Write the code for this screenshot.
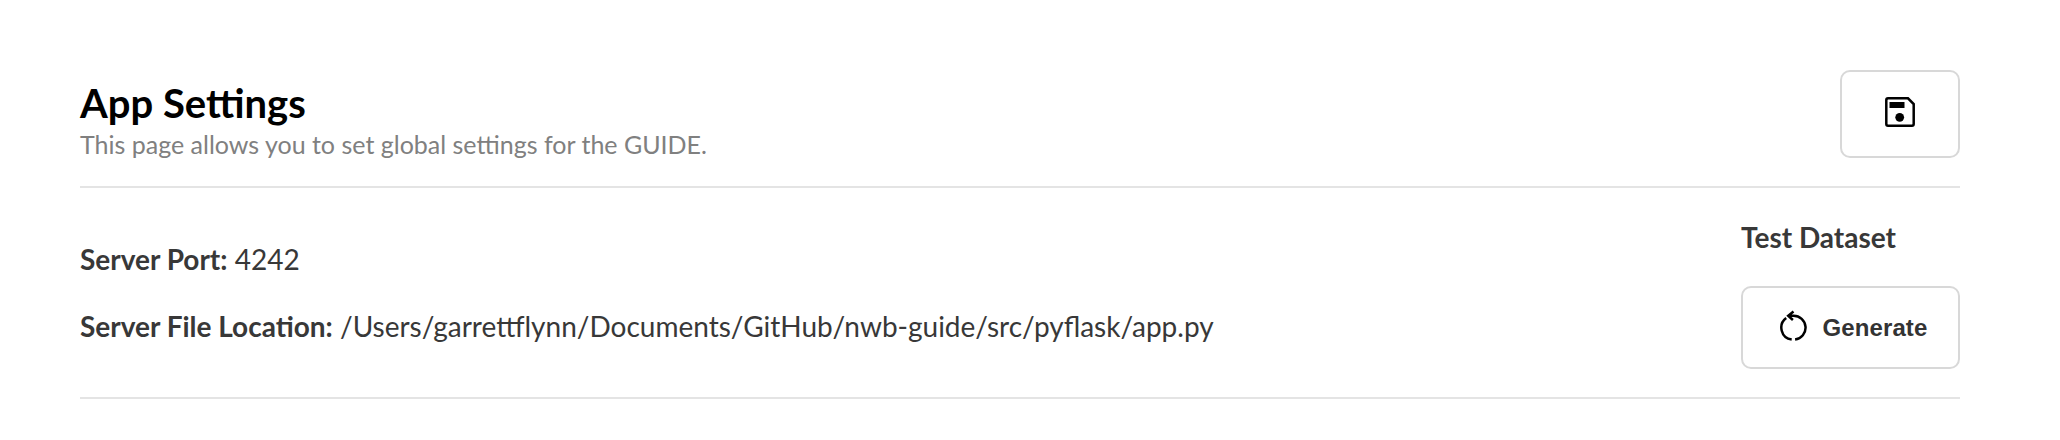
<main>
  <header>
    <div>
      <h1>App Settings</h1>
      <p class="sub">This page allows you to set global settings for the GUIDE.</p>
    </div>
    <button class="save" aria-label="Save">
      <svg width="30" height="30" viewBox="0 0 30 30"><path d="M3 1.300H23L28.700 7V27Q28.700 28.700 27 28.700H3Q1.300 28.700 1.300 27V3Q1.300 1.300 3 1.300Z" fill="none" stroke="#000" stroke-width="2.500"/><path d="M4.500 5H19.500V11H4.500Z"/><circle cx="14.700" cy="20.300" r="4.400"/></svg>
    </button>
  </header>
  <section>
    <div class="info">
      <p><b>Server Port:</b> 4242</p>
      <p><b>Server File Location:</b> /Users/garrettflynn/Documents/GitHub/nwb-guide/src/pyflask/app.py</p>
    </div>
    <div class="test">
      <h4>Test Dataset</h4>
      <button class="gen">
        <svg width="28" height="32" viewBox="0 0 28 32" fill="none" stroke="#000" stroke-width="2.500"><path d="M7.200 8.100A12 12 0 0 0 12.700 29.600M16.100 29.600A12 12 0 0 0 14.400 5.700L9.200 5.700M14.500 1.500L9.200 5.700L13.900 10"/></svg>
        <span>Generate</span>
      </button>
    </div>
  </section>
</main>

<style>
  :global(body) { background: #fff; }
  main { padding: 70px 100px 0 80px; font-family: Lato, sans-serif; color: #383838; }
  header { display: flex; justify-content: space-between; height: 116px; border-bottom: 2px solid #e4e4e4; }
  h1 { margin: 8px 0 1px; font-size: 40px; line-height: 50px; color: #000; }
  .sub { margin: 0; font-size: 25px; line-height: 31px; color: #808080; }
  button { box-sizing: border-box; display: flex; align-items: center; justify-content: center; border: 2px solid #d8d8d8; border-radius: 10px; background: #fff; padding: 0; }
  .save { width: 120px; height: 88px; padding-bottom: 4px; }
  section { display: flex; justify-content: space-between; height: 209px; border-bottom: 2px solid #e4e4e4; }
  .info { padding-top: 51px; font-size: 28px; line-height: 40px; }
  .info p { margin: 0 0 27px; }
  .test { width: 219px; padding-top: 32px; }
  h4 { margin: 0 0 32px; font-size: 28px; line-height: 34px; }
  .gen { width: 219px; height: 83px; gap: 16px; padding-left: 5px; font: bold 24px "Liberation Sans", sans-serif; letter-spacing: 0.1px; color: #333; }
  .gen svg { margin-bottom: 3px; }
</style>
